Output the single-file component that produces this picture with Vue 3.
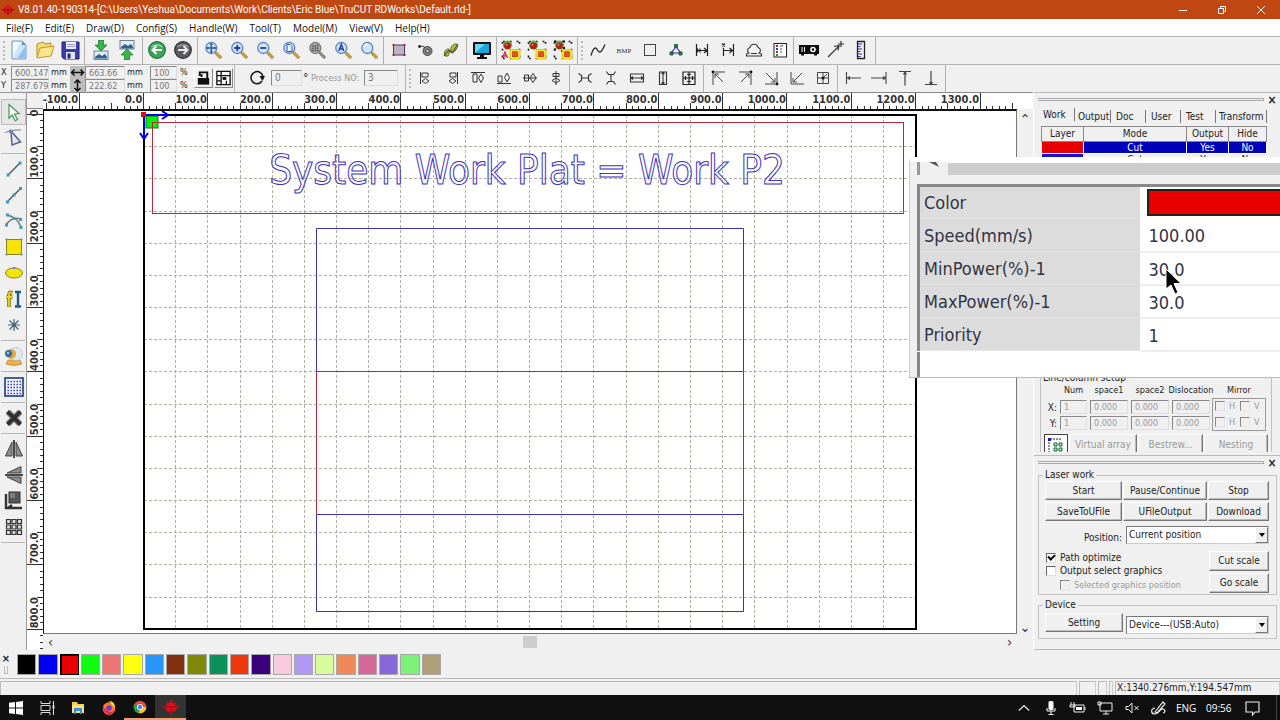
<script setup>
import { ref } from 'vue'

const lens = (inner = '', tint = '#cfe5fb', ring = '#5b82bd', handle = '#d2a33f') =>
  `<path d="M12.5 12.5l5.500 5.500" stroke="#7d6a3a" stroke-width="3"/><path d="M12.500 12.200l5.300 5.500" stroke="${handle}" stroke-width="2"/><circle cx="8.300" cy="8" r="5.500" fill="${tint}" stroke="${ring}" stroke-width="1.300"/>${inner}`

const groupArt = (extra) =>
  `<path d="M2 1.500h17M2 18.500h8" stroke="#111" stroke-width="1.600" stroke-dasharray="1.800 5"/><path d="M1.500 2v16M18.500 2v16" stroke="#111" stroke-width="1.600" stroke-dasharray="1.800 5"/>${extra}<rect x="9" y="9.500" width="10" height="9.500" fill="#f6ee20" stroke="#b8a800" stroke-width=".6"/><rect x="11.500" y="11.700" width="5" height="5" fill="#e8502a" stroke="#b02a10" stroke-width=".6"/>`
const ball = '<circle cx="6.500" cy="5" r="4.600" fill="#58b848"/><circle cx="6.500" cy="5.800" r="3.400" fill="#b81c1c"/><circle cx="5.500" cy="4.800" r="1" fill="#f08070"/>'

const art = {
  newFile: '<path d="M3 1h10l4 4v14H3z" fill="#cfe6fa" stroke="#7d9cc0"/><path d="M4 2h7L4 17z" fill="#f4faff"/><path d="M8 18L16 7v11z" fill="#8fc3ee"/><path d="M13 1v4h4z" fill="#5a8fcf"/>',
  open: '<path d="M2 17V4l6-2 2 2 6-1v4" fill="#f8dc7a" stroke="#b98a1c"/><path d="M2 18L5 8l14-2-3 10z" fill="#fbe58a" stroke="#c6952a"/>',
  save: '<path d="M1 2h17v17H3l-2-2z" fill="#3c3ca8" stroke="#1f1f78"/><rect x="5" y="2" width="10" height="7" fill="#f0f0fa"/><path d="M6 4.500h8M6 6.500h8" stroke="#9a9ac8"/><rect x="5" y="12" width="9" height="7" fill="#e2e2f4"/><rect x="6.500" y="13.500" width="3" height="5" fill="#26267a"/>',
  importPic: '<rect x="3" y="11" width="14" height="8.500" fill="#dceaf5" stroke="#708090"/><path d="M4 17l4-3 3 2 3-2 2 3v1.500H4z" fill="#335f88"/><path d="M7.500 0h5v5H16l-6 6-6-6h3.500z" fill="#35b54a" stroke="#17702a" stroke-width=".7"/>',
  exportPic: '<rect x="3" y=".5" width="14" height="8.500" fill="#dceaf5" stroke="#708090"/><path d="M4 7l4-3 3 2 3-2 2 3v1.500H4z" fill="#335f88"/><path d="M7.500 20h5v-5H16l-6-6-6 6h3.500z" fill="#35b54a" stroke="#17702a" stroke-width=".7"/>',
  undo: '<circle cx="10" cy="10" r="8.300" fill="#3fa55a" stroke="#176e33" stroke-width="1.200"/><path d="M4.500 7a7 5 0 0 1 11 0" stroke="#8fd6a0" stroke-width="1.500"/><path d="M15 10H6M9.500 6L5.500 10l4 4" stroke="#fff" stroke-width="2"/>',
  redo: '<circle cx="10" cy="10" r="8.300" fill="#5c5c60" stroke="#2e2e30" stroke-width="1.200"/><path d="M4.500 7a7 5 0 0 1 11 0" stroke="#9a9a9c" stroke-width="1.500"/><path d="M5 10h9M10.500 6l4 4-4 4" stroke="#e8e8e8" stroke-width="2"/>',
  zPan: lens('<path d="M8.300 4v8M4.300 8h8" stroke="#2b55a5" stroke-width="1.300"/><path d="M8.300 2.800l-1.800 2h3.600zM8.300 13.200l-1.800-2h3.600zM3.100 8l2-1.800v3.600zM13.500 8l-2-1.800v3.600z" fill="#2b55a5"/>'),
  zIn: lens('<path d="M8.300 5v6M5.300 8h6" stroke="#1f3f9c" stroke-width="1.800"/>'),
  zOut: lens('<path d="M5.300 8h6" stroke="#1f3f9c" stroke-width="1.800"/>'),
  zPage: lens('<path d="M6 4.500h3l2 2v5H6z" fill="#eef6ff" stroke="#2b55a5"/>'),
  zAll: lens('<path d="M4 6h8.500M4 8.200h8.500M4 10.400h8.500M6 4v8M8.300 4v8M10.600 4v8" stroke="#555" stroke-width=".8"/>', '#c4c4c4', '#777', '#8f8f8f'),
  zSel: lens('<path d="M5.800 11l2.500-6.500L10.800 11M6.700 9h3.200" stroke="#1f3f9c" stroke-width="1.400"/>'),
  zWin: lens('<path d="M4.800 7a4 4 0 0 1 4-3" stroke="#fff" stroke-width="1.400"/>'),
  frame: '<rect x="4.500" y="5" width="11" height="10" fill="#b9b4bf" stroke="#4a3a6a"/><path d="M3.500 4h2v2h-2zM14.500 4h2v2h-2zM3.500 14h2v2h-2zM14.500 14h2v2h-2z" fill="#c02020"/>',
  eye: '<circle cx="12.500" cy="11" r="4.500" fill="#888" stroke="#444"/><circle cx="12.500" cy="11" r="1.800" fill="#ddd" stroke="#333"/><path d="M5 6.500q3-1 5 1" stroke="#333"/><circle cx="4.500" cy="6.500" r="1.400" fill="#222"/>',
  nodes: '<path d="M4 16c-2-4 1-7 3-7s2 3 0 7zM10 11c-1-4 2-7 5-7s1 5-1 7-3 2-4 0z" fill="#b9c13a" stroke="#5e6612"/><path d="M3 16L8 10l3 3 6-9" stroke="#444" stroke-width="1.100"/>',
  monitor: '<rect x="1" y="2" width="18" height="13" rx="1" fill="#111"/><rect x="3" y="4" width="14" height="9" fill="#18a8dc"/><path d="M3 13V4h10z" fill="#6ed6f4"/><path d="M8 15h4v2h3v2H5v-2h3z" fill="#111"/>',
  groupA: groupArt(ball + '<path d="M1.500 18l2.500-6 2.500 6M2.500 16h3" stroke="#e02040" stroke-width="1.300"/>'),
  groupB: groupArt(ball),
  groupC: groupArt(ball + '<path d="M1 1.500h2M10 1.500h2M1 9.500h2M10 8h2M8 11h2" stroke="#111" stroke-width="2"/>'),
  curve: '<path d="M3 15.500C5 9 7 5.500 9.500 10S14 11 17 4.500" stroke="#222" stroke-width="1.300"/>',
  bmp: '<text x="10" y="13" text-anchor="middle" font-family="Liberation Serif, serif" font-size="7" fill="#333">BMP</text>',
  square: '<rect x="4.500" y="4.500" width="11" height="11" stroke="#444"/>',
  tree: '<path d="M10 7L5 13h10z" stroke="#2525b0" stroke-width="1.100"/><path d="M8.500 4.500h3v3h-3zM4 12h3v3H4zM13 12h3v3h-3z" fill="#1f8a50" stroke="#0c4a28" stroke-width=".8"/>',
  hEnds: '<path d="M4.500 4v12M15.500 4v12M5 10.500h10M12 8l3 2.500-3 2.500M8 8.500v4M4.500 8l2 2.500-2 2.500" stroke="#222" stroke-width="1.200"/>',
  xEnds: '<path d="M5.500 8v8M15.500 4v12M6 10.500h8M11.500 8l3 2.500-3 2.500M4 3.500l3 3M7 3.500l-3 3" stroke="#222" stroke-width="1.200"/>',
  stamp: '<path d="M5 13a3 3 0 0 1 1-5.500 4.100 4.100 0 0 1 8 0 3 3 0 0 1 1 5.500l2.500 1v2h-15v-2zM7 13.500h6" fill="#f3f3f3" stroke="#333" stroke-width="1.100"/>',
  list: '<rect x="4" y="3.500" width="12.500" height="13.500" fill="#fff" stroke="#222"/><path d="M6 6h2M6 12h2" stroke="#c02020" stroke-width="2"/><path d="M6 9h2" stroke="#2040c0" stroke-width="2"/><path d="M6 15h2" stroke="#209040" stroke-width="2"/><path d="M10 6h2l1-1M10 9h2M10 12h2" stroke="#555"/>',
  projector: '<path d="M0 5h20v9H0zM2 14h3v1.500H2zM15 14h3v1.500h-3z" fill="#0a0a0a"/><circle cx="14" cy="9.500" r="2.800" fill="#fff"/><circle cx="14" cy="9.500" r="1.300" fill="#111"/><path d="M3 7v5M5.500 7v5" stroke="#fff"/>',
  wand: '<path d="M3 17L14 6M9 6.500l5-1-1 5M16 1v6M13 4h6" stroke="#333" stroke-width="1.200"/>',
  ruler: '<path d="M6.500 1.500h7v17h-7z" fill="#f2f2ff" stroke="#222" stroke-width="1.300"/><path d="M7 4h4M7 6.500h2.500M7 9h4M7 11.500h2.500M7 14h4M7 16.500h2.500" stroke="#3d2a96"/>',
  alL: '<path d="M4.500 4v12M6 5h6v4H6zM6 13l3.500-2.500L13 13l-3.500 2.500z" stroke="#333"/>',
  alR: '<path d="M15.500 4v12M8 5h6v4H8zM7 13l3.500-2.500L14 13l-3.500 2.500z" stroke="#333"/>',
  alT: '<path d="M3 4.500h14M5 6h4v8H5zM13 6l2.500 4-2.500 4.500-2.500-4.500z" stroke="#333"/>',
  alB: '<path d="M3 15.500h14M4 8h4v6H4zM13 5l2.500 4.500L13 14l-2.500-4.500z" stroke="#333"/>',
  alHc: '<path d="M3 10h14M4.500 7h4v6h-4zM13 5.500l3 4.500-3 4.500-3-4.500z" stroke="#333"/>',
  alVc: '<path d="M10 3v14M7 5.500h6v3H7zM10 10l4 2.500-4 2.500-4-2.500z" stroke="#333"/>',
  spH: '<path d="M3.500 5.500l3 2v5l-3 2M16.500 5.500l-3 2v5l3 2M6.500 10h7" stroke="#333" stroke-width="1.100"/>',
  spV: '<path d="M5.500 3.500l2 3h5l2-3M5.500 16.500l2-3h5l2 3M10 6.500v7" stroke="#333" stroke-width="1.100"/>',
  sameW: '<path d="M3.500 6h13v8h-13zM3.500 10h13M6 8.500L4 10l2 1.500M14 8.500l2 1.500-2 1.500" stroke="#333" stroke-width="1.100"/>',
  sameH: '<path d="M6.500 4h7v12.500h-7zM10 4v12M8.500 6L10 4.500 11.500 6M8.500 14.500L10 16l1.500-1.500" stroke="#333" stroke-width="1.100"/>',
  sameS: '<path d="M4 4h12v12.500H4zM10 4v12M4 10h12M6.500 8v4M13.500 8v4M8 6.500h4M8 13.500h4" stroke="#222" stroke-width="1.200"/>',
  cTL: '<path d="M4 17V4h12M6 6l8 8M6 10V6h4" stroke="#444"/><circle cx="4" cy="4" r="1.400" fill="#111"/>',
  cTR: '<path d="M4 4h12v13M14 6l-8 8M10 6h4v4" stroke="#444"/><circle cx="16" cy="4" r="1.400" fill="#111"/>',
  cBR: '<path d="M4 16h12V4M5 5l9 9M10 14h4v-4" stroke="#444"/><circle cx="16" cy="16" r="1.400" fill="#111"/>',
  cBL: '<path d="M4 4v12h13M15 5l-9 9M6 10v4h4" stroke="#444"/>',
  cC: '<path d="M4.500 4.500h11v11h-11zM10 4v12M4 10h12M14 6l-4 4" stroke="#444"/><circle cx="10" cy="10" r="1.500" fill="#111"/>',
  mL: '<path d="M3.500 4v12M4 10h14M7 8.500L4.500 10 7 11.500" stroke="#444" stroke-width="1.100"/>',
  mR: '<path d="M17 4v12M2 10h14.500M14 8.500l2.500 1.500-2.500 1.500" stroke="#444" stroke-width="1.100"/>',
  mT: '<path d="M4 3.500h12M10 4v13.500M8.500 6.500L10 4l1.500 2.500" stroke="#444" stroke-width="1.200"/>',
  mB: '<path d="M4 16.500h12M10 3v13M8.500 14l1.500 2.500 1.500-2.500" stroke="#444" stroke-width="1.200"/>',
  pick: '<path d="M5 2.500l10 9-4.500.5 3 5.500-2.300 1.200-3-5.700L5 16z" fill="#fff" stroke="#3b9a54" stroke-width="1.200"/>',
  node: '<path d="M1 5c5-3 11-3 16-3" stroke="#777"/><path d="M7 3l9.500 11-8.500 3z" fill="#e2e6f2" stroke="#5a6280" stroke-width="1.500"/><path d="M5 2h4v3H5z" fill="#6a84b8"/>',
  line: '<path d="M4 16L16 4" stroke="#555" stroke-width="1.400"/><path d="M2.500 14.500h3v3h-3zM14.500 2.500h3v3h-3z" fill="#3e9cb8"/>',
  poly: '<path d="M3 17L17 3" stroke="#555" stroke-width="1.400"/><path d="M2 15.500h3v3H2zM8.500 8.500h3v3h-3zM15 2h3v3h-3z" fill="#3e9cb8"/>',
  bez: '<path d="M3 4q10 2 14 12M2 14q6-9 15-6" stroke="#777" stroke-width="1.600"/><path d="M2 2.500h3v3H2zM1 12.500h3v3H1zM15.500 15h3v3h-3zM15 7h3v3h-3zM8.500 6h3v3h-3z" fill="#3e9cb8"/>',
  rect: '<rect x="2.500" y="2.500" width="15" height="15" fill="#f6e30a" stroke="#8e8420"/><path d="M1.500 1.500h2v2h-2zM16.500 1.500h2v2h-2zM1.500 16.500h2v2h-2zM16.500 16.500h2v2h-2z" fill="#6f86c4"/>',
  oval: '<ellipse cx="10" cy="10" rx="8.500" ry="5" fill="#f6e30a" stroke="#8e8420"/><path d="M8.500 4h3v2h-3z" fill="#6f86c4"/>',
  text: '<path d="M8.500 4C5 2.500 5 4 5 6v12M2.500 8h6" stroke="#7d6a12" stroke-width="3.600"/><path d="M8.500 4C5 2.500 5 4 5 6v11.500M2.500 8h6" stroke="#f0d820" stroke-width="1.800"/><path d="M11 3h6M11 17.500h6M14 3v14" stroke="#1f5a80" stroke-width="2.400"/>',
  star: '<path d="M10 4v12M4 10h12M5.500 5.500l9 9M14.500 5.500l-9 9" stroke="#45607e" stroke-width="1.200"/>',
  cam: '<path d="M4 14h12l2 4q-8 3-16 0z" fill="#eab04a" stroke="#b57c1c" stroke-width=".6"/><circle cx="12" cy="8" r="6.500" fill="#dfe9f0" stroke="#a9bac8" stroke-width=".7"/><circle cx="7" cy="8" r="5" fill="#e3a63e"/><circle cx="4.500" cy="7.500" r="3.500" fill="#2d6e9e"/><circle cx="4" cy="7" r="1.200" fill="#9fd4f2"/>',
  gridDots: '<rect x="1" y="1" width="18" height="18" fill="#f4f6ff" stroke="#153f7c" stroke-width="1.600"/><path d="M3.500 4.500h14M3.500 7.500h14M3.500 10.500h14M3.500 13.500h14M3.500 16.500h14" stroke="#2b2bb0" stroke-width="1.400" stroke-dasharray="1.400 1.600"/>',
  del: '<path d="M4 4l12 12M16 4L4 16" stroke="#9a9a9a" stroke-width="6.500"/><path d="M3.500 3.500l13 13M16.500 3.500l-13 13" stroke="#303030" stroke-width="4"/>',
  mirH: '<path d="M8 3v14H1.500zM12 3v14h6.500z" fill="#8c8c8c" stroke="#444"/><path d="M10 1v18" stroke="#111" stroke-width="1.500"/>',
  mirV: '<path d="M3 8l14-6.500V8zM3 12l14 6.500V12z" fill="#8c8c8c" stroke="#444"/><path d="M1 10h18" stroke="#111" stroke-width="1.500"/>',
  dock: '<rect x="5" y="1" width="11" height="11" fill="#555" stroke="#333"/><path d="M6 2h5v5H6z" fill="#7d7d7d"/><path d="M2 3v14h16M4 17l4-3" stroke="#333" stroke-width="2.400"/>',
  array: '<path d="M2.500 2.500h4v4h-4zM8 2.500h4v4H8zM13.500 2.500h4v4h-4zM2.500 8h4v4h-4zM8 8h4v4H8zM13.500 8h4v4h-4zM2.500 13.500h4v4h-4zM8 13.500h4v4H8zM13.500 13.500h4v4h-4z" fill="#ddd" stroke="#333" stroke-width="1.200"/>',
  win: '<path d="M3 4.800L9 4v5.600H3zM10 3.900L17 3v6.600h-7zM3 10.400h6V16l-6-.8zM10 10.400h7V17l-7-.9z" fill="#fff"/>',
  task: '<path d="M4 3v2.500h9V3M4 17v-2.500h9V17M4 7.500h9v5H4z" stroke="#ddd"/><path d="M16.500 3v14" stroke="#ddd"/><path d="M15.500 7.500h2v3h-2z" fill="#ddd"/>',
  folder: '<path d="M4 4h5l1 2h6v9H4z" fill="#f7c84a"/><path d="M4 7h12v8H4z" fill="#fbe08a"/><path d="M6 10h8v6h-2v-3H8v3H6z" fill="#3b8fd0"/>',
  fox: '<circle cx="10" cy="10.500" r="6.300" fill="#ff7b22"/><path d="M10 3q6 0 6 7l-3-3z" fill="#ffd43c"/><path d="M4 6q-1 9 6 10.500 5 0 6-5-2 3-6 2-5-2-6-7.500z" fill="#e8285a"/><circle cx="10" cy="10" r="2.800" fill="#6a3ad0"/>',
  chrome: '<circle cx="10" cy="10" r="6.300" fill="#e24a3a"/><path d="M10 10L4.500 6.900A6.300 6.300 0 0 0 9 16.200z" fill="#2f9e50"/><path d="M10 10h6.300A6.300 6.300 0 0 1 9 16.200z" fill="#f6c62c"/><circle cx="10" cy="10" r="3" fill="#fff"/><circle cx="10" cy="10" r="2.200" fill="#4285f4"/>',
  red: '<path d="M10 2.500l2 3.500 3-.5-.5 2.500 4 2-4 2 .5 2.500-3-.5-2 4-2-4-3 .5.500-2.500-4-2 4-2L5 5.500l3 .5z" fill="#d8101c"/><path d="M3 10h14M10 12v4" stroke="#7c0810" stroke-width=".8"/>',
  up: '<path d="M5 12.500l5-5 5 5" stroke="#e8e8e8" stroke-width="1.200"/>',
  mic: '<rect x="7.500" y="3" width="5" height="9" rx="1.500" fill="#fff"/><path d="M6 10v3h8v-3M10 13v3M7.500 16.500h5" stroke="#fff"/>',
  batt: '<path d="M6 7h10v7H6zM17 9v3M3 4v3M6 4v3M2 7h5v2H2z" stroke="#eee"/><path d="M8 9h6v3H8z" fill="#fff"/>',
  net: '<path d="M5 5h12v8H5zM11 13v3M8 16h6M3 4h3v3H3z" stroke="#eee"/>',
  mute: '<path d="M4 8.500h2.500L10 5v10l-3.500-3.500H4zM12.500 8l4 4M16.500 8l-4 4" stroke="#eee"/>',
  pen: '<path d="M6 14L14 4l2 2-8 9zM6 10c-5 1-4 6 0 6s5-6 8-5 2 4 0 4" stroke="#eee" stroke-width="1.200"/>',
  note: '<path d="M4 4h13v10h-4l-2.500 3V14H4z" stroke="#eee" stroke-width="1.100"/>',
}

const topGroups = [
  { w: 85, lead: true, icons: ['newFile', 'open', 'save'] },
  { w: 58, icons: ['importPic', 'exportPic'] },
  { w: 55, icons: ['undo', 'redo'] },
  { w: 186, icons: ['zPan', 'zIn', 'zOut', 'zPage', 'zAll', 'zSel', 'zWin'] },
  { w: 83, icons: ['frame', 'eye', 'nodes'] },
  { w: 30, icons: ['monitor'] },
  { w: 81, icons: ['groupA', 'groupB', 'groupC'] },
  { w: 216, lead: true, icons: ['curve', 'bmp', 'square', 'tree', 'hEnds', 'xEnds', 'stamp', 'list'] },
  { w: 82, icons: ['projector', 'wand', 'ruler'] },
]
const alignGroups = [
  { w: 164, lead: true, icons: ['alL', 'alR', 'alT', 'alB', 'alHc', 'alVc'] },
  { w: 134, icons: ['spH', 'spV', 'sameW', 'sameH', 'sameS'] },
  { w: 134, icons: ['cTL', 'cTR', 'cBR', 'cBL', 'cC'] },
  { w: 108, icons: ['mL', 'mR', 'mT', 'mB'] },
]
const sideGroups = [
  ['pick', 'node'],
  ['line', 'poly', 'bez', 'rect', 'oval', 'text', 'star'],
  ['cam'],
  ['gridDots'],
  ['del'],
  ['mirH', 'mirV', 'dock', 'array'],
]

const menus = ['File(F)', 'Edit(E)', 'Draw(D)', 'Config(S)', 'Handle(W)', 'Tool(T)', 'Model(M)', 'View(V)', 'Help(H)']
const tabs = ['Work', 'Output', 'Doc', 'User', 'Test', 'Transform']
const palette = ['#000000', '#0000f0', '#e80000', '#10fc10', '#ee7474', '#ffff10', '#2896f8', '#803010', '#808808', '#0c905c', '#ee380a', '#3a007c', '#f8ccdc', '#b098f4', '#d8fc9c', '#f08858', '#d46898', '#8868d8', '#7cf078', '#b0a078']
const props = [
  ['Speed(mm/s)', '100.00'],
  ['MinPower(%)-1', '30.0'],
  ['MaxPower(%)-1', '30.0'],
  ['Priority', '1'],
]

/* Bed geometry: 100 mm spans 64.35 px on screen */
const step = 64.35
const ox = 100.5
const oy = 5.5
const hTicks = []
for (let i = -15; i <= 135; i++) hTicks.push({ i, x: Math.floor(ox + (i * step) / 10) + 0.5 })
const vTicks = []
for (let i = 0; i <= 83; i++) vTicks.push({ i, y: Math.floor(oy + (i * step) / 10) + 0.5 })
const tickLen = (i) => (i % 10 === 0 ? 16 : i % 5 === 0 ? 6 : 3)
const gridX = Array.from({ length: 23 }, (_, k) => Math.floor(ox + ((k + 1) * step) / 2) + 0.5)
const gridY = Array.from({ length: 15 }, (_, k) => Math.floor(oy + ((k + 1) * step) / 2) + 0.5)

const pathOptimize = ref(true)
const outputSelect = ref(false)
</script>

<template>
  <div class="app">
    <header class="title">
      <svg class="ic16" viewBox="0 0 20 20" fill="none" v-html="art.red"></svg>
      <h1>V8.01.40-190314-[C:\Users\Yeshua\Documents\Work\Clients\Eric Blue\TruCUT RDWorks\Default.rld-]</h1>
      <div class="winbtns">
        <button aria-label="Minimize"><svg viewBox="0 0 10 10"><path d="M1 5.500h8" /></svg></button>
        <button aria-label="Restore"><svg viewBox="0 0 10 10"><path d="M1.500 3.500h5v5h-5zM3.500 3.500v-2h5v5h-2" /></svg></button>
        <button aria-label="Close"><svg viewBox="0 0 10 10"><path d="M1 1l8 8M9 1L1 9" /></svg></button>
      </div>
    </header>

    <nav class="menu"><button v-for="m in menus" :key="m">{{ m }}</button></nav>

    <div class="bar">
      <div v-for="(g, gi) in topGroups" :key="gi" class="grp" :class="{ lead: g.lead }" :style="{ width: g.w + 'px' }">
        <button v-for="n in g.icons" :key="n" class="tb" :aria-label="n"><svg viewBox="0 0 20 20" fill="none" v-html="art[n]"></svg></button>
      </div>
    </div>

    <div class="bar second">
      <div class="xy">
        <label for="px">X</label><input id="px" class="num" value="600.147" />
        <span class="unit">mm</span>
        <svg class="dim" viewBox="0 0 15 13"><path d="M1.500 6.500h12M4.500 3.500l-3 3 3 3M10.500 3.500l3 3-3 3" /></svg>
        <input class="num" aria-label="Width" value="663.66" /><span class="unit">mm</span>
        <input class="num" aria-label="Scale X" value="100" /><span class="unit pct">%</span>
        <label for="py">Y</label><input id="py" class="num" value="287.679" />
        <span class="unit">mm</span>
        <svg class="dim" viewBox="0 0 15 13"><path d="M7.500 1v11M4.500 4l3-3 3 3M4.500 9l3 3 3-3" /></svg>
        <input class="num" aria-label="Height" value="222.62" /><span class="unit">mm</span>
        <input class="num" aria-label="Scale Y" value="100" /><span class="unit pct">%</span>
      </div>
      <button class="sq" aria-label="Lock ratio"><svg viewBox="0 0 18 18"><path d="M7 8V6H5V3h8v6" fill="none" stroke="#111" stroke-width="2" /><path d="M3 9h12v7H3z" fill="#111" /></svg></button>
      <button class="sq" aria-label="Anchor"><svg viewBox="0 0 18 18"><path d="M2 2h14v14H2zM2 6.500h14M6.500 2v14M2 12h4M12 12v4" fill="#fff" stroke="#111" stroke-width="1.400" /><path d="M8 8h4v3H8z" fill="#111" /></svg></button>
      <div class="rot">
        <svg viewBox="0 0 16 16"><path d="M13 11a6 6 0 1 1 1-4" fill="none" stroke="#111" stroke-width="1.500" /><path d="M10.500 6h5.500l-2.500 5z" fill="#111" /></svg>
        <input class="num" aria-label="Rotation" value="0" /><span class="deg">°</span>
        <label for="pno">Process NO:</label><input id="pno" class="num" value="3" />
      </div>
      <div v-for="(g, gi) in alignGroups" :key="gi" class="grp" :class="{ lead: g.lead }" :style="{ width: g.w + 'px' }">
        <button v-for="n in g.icons" :key="n" class="tb" :aria-label="n"><svg viewBox="0 0 20 20" fill="none" v-html="art[n]"></svg></button>
      </div>
    </div>

    <main class="work">
      <aside class="side">
        <div v-for="(g, gi) in sideGroups" :key="gi" class="sgrp">
          <button v-for="n in g" :key="n" class="tb" :class="{ on: n === 'pick' }" :aria-label="n"><svg viewBox="0 0 20 20" fill="none" v-html="art[n]"></svg></button>
        </div>
      </aside>

      <section class="stage">
        <div class="corner"></div>
        <svg class="rulerH">
          <path v-for="t in hTicks" :key="t.i" :d="`M${t.x} 16V${16 - tickLen(t.i)}`" />
          <text v-for="k in 15" :key="k" :x="ox + (k - 2) * step - 1" y="10" text-anchor="end">{{ (k - 2) * 100 }}.0</text>
        </svg>
        <svg class="rulerV">
          <path v-for="t in vTicks" :key="t.i" :d="`M16 ${t.y}H${16 - tickLen(t.i)}`" />
          <text v-for="k in 9" :key="k" :transform="`translate(11 ${oy + (k - 1) * step - (k > 1 ? 1 : -2)}) rotate(-90)`">{{ k > 1 ? (k - 1) * 100 + '.0' : '0' }}</text>
        </svg>
        <svg class="canvas">
          <g transform="translate(-1 -2)">
            <g class="grid">
              <path v-for="x in gridX" :key="'x' + x" :d="`M${x} 6V519`" />
              <path v-for="y in gridY" :key="'y' + y" :d="`M101 ${y}H872`" />
            </g>
            <rect x="101" y="6" width="772" height="514" class="bed" />
            <rect x="103" y="7" width="12" height="12" fill="#08f008" stroke="#187818" />
            <rect x="109.500" y="13.500" width="751" height="91" class="cut" />
            <path d="M273.500 262.500V119.500H700.500V262.500M273.500 405.500V502.500H700.500V405.500M273.500 405.500H700.500" class="mark" />
            <path d="M273.500 405.500V262.500H700.500V405.500" class="cut" />
            <text class="engrave" x="484" y="75" text-anchor="middle">System Work Plat = Work P2</text>
            <path d="M101 6h24M119 2l6 4-6 4M101 6v23M97 24l4 6 4-6" stroke="#0000f0" stroke-width="2" fill="none" />
            <rect x="98" y="3" width="5" height="5" fill="#d80f20" />
          </g>
        </svg>
        <div class="vs"><i>⌃</i><i>⌄</i></div>
        <div class="hs"><i>‹</i><b></b><i>›</i></div>
      </section>

      <aside class="docks">
        <section class="dock top">
          <div class="grip"><span></span><button aria-label="Close panel">×</button></div>
          <div class="tabs"><button v-for="(t, i) in tabs" :key="t" :class="{ active: i === 0 }">{{ t }}</button></div>
          <table class="layers">
            <thead><tr><th>Layer</th><th>Mode</th><th>Output</th><th>Hide</th></tr></thead>
            <tbody>
              <tr class="sel"><td class="lr"></td><td>Cut</td><td>Yes</td><td>No</td></tr>
              <tr><td class="lb"></td><td>Cut</td><td>Yes</td><td>No</td></tr>
            </tbody>
          </table>
          <fieldset class="arr">
            <legend>Line/column setup</legend>
            <div class="arrgrid">
              <span></span><span>Num</span><span>space1</span><span>space2</span><span class="last">Dislocation</span>
              <template v-for="a in ['X', 'Y']" :key="a">
                <label :for="'n' + a">{{ a }}:</label>
                <input :id="'n' + a" class="num" value="1" disabled />
                <input class="num" :aria-label="a + ' space1'" value="0.000" disabled />
                <input class="num" :aria-label="a + ' space2'" value="0.000" disabled />
                <input class="num" :aria-label="a + ' dislocation'" value="0.000" disabled />
              </template>
            </div>
            <div class="mirror">
              <span>Mirror</span>
              <div><label v-for="(k, i) in ['H', 'V', 'H', 'V']" :key="i"><input type="checkbox" disabled />{{ k }}</label></div>
            </div>
            <div class="arrbtns">
              <button class="virt" aria-label="Array layout"><svg viewBox="0 0 20 18"><path d="M3 17V3h13" fill="none" stroke="#222" stroke-dasharray="2 1" /><path d="M8 7h3v3H8zM13 7h3v3h-3zM8 12h3v3H8zM13 12h3v3h-3z" fill="#bfe8c8" stroke="#0f6a38" /><path d="M2 2h3v3H2z" fill="#1818b0" /></svg></button>
              <button class="btn" disabled>Virtual array</button><button class="btn" disabled>Bestrew...</button><button class="btn" disabled>Nesting</button>
            </div>
          </fieldset>
        </section>

        <section class="dock low">
          <div class="grip"><span></span><button aria-label="Close panel">×</button></div>
          <fieldset class="laser">
            <legend>Laser work</legend>
            <div class="three">
              <button class="btn">Start</button><button class="btn">Pause/Continue</button><button class="btn">Stop</button>
              <button class="btn">SaveToUFile</button><button class="btn">UFileOutput</button><button class="btn">Download</button>
            </div>
            <div class="pos">
              <label for="pos">Position:</label>
              <span class="sel-wrap"><select id="pos"><option>Current position</option></select><i></i></span>
            </div>
            <div class="opts">
              <div class="checks">
                <label><input v-model="pathOptimize" type="checkbox" />Path optimize</label>
                <label><input v-model="outputSelect" type="checkbox" />Output select graphics</label>
                <label class="off"><input type="checkbox" disabled />Selected graphics position</label>
              </div>
              <div class="scales"><button class="btn">Cut scale</button><button class="btn">Go scale</button></div>
            </div>
          </fieldset>
          <fieldset class="device">
            <legend>Device</legend>
            <button class="btn">Setting</button>
            <span class="sel-wrap"><select aria-label="Device"><option>Device---(USB:Auto)</option></select><i></i></span>
          </fieldset>
        </section>
      </aside>
    </main>

    <div class="palette">
      <div class="pgrip"><button aria-label="Close palette">×</button><span></span></div>
      <div class="swatches"><button v-for="(c, i) in palette" :key="c" :aria-label="c" :class="{ cur: i === 2 }" :style="{ background: c }"></button></div>
    </div>

    <footer class="status"><span class="grow"></span><span class="a"></span><span class="b"></span><span class="c"></span><span class="coord">X:1340.276mm,Y:194.547mm</span></footer>

    <div class="taskbar">
      <button v-for="n in ['win', 'task', 'folder', 'fox', 'chrome', 'red']" :key="n" :aria-label="n" :class="'t-' + n"><svg viewBox="0 0 20 20" fill="none" v-html="art[n]"></svg></button>
      <div class="tray">
        <button v-for="n in ['up', 'mic', 'batt', 'net', 'mute', 'pen']" :key="n" :aria-label="n"><svg viewBox="0 0 20 20" fill="none" v-html="art[n]"></svg></button>
        <span>ENG</span><span class="clock">09:56</span>
        <button class="t-note" aria-label="Notifications"><svg viewBox="0 0 20 20" fill="none" v-html="art.note"></svg></button>
      </div>
    </div>

    <div class="magnify">
      <div class="mscroll"><svg viewBox="0 0 12 8"><path d="M1 0h7l3 5z" fill="#555" /></svg><span></span></div>
      <table>
        <tbody>
          <tr><th>Color</th><td><div class="colorbox"></div></td></tr>
          <tr v-for="p in props" :key="p[0]"><th>{{ p[0] }}</th><td>{{ p[1] }}</td></tr>
        </tbody>
      </table>
      <svg class="cursor" viewBox="0 0 18 28"><path d="M1 1v20l5-4 4 9 3-1.500-4-9h7z" fill="#000" stroke="#fff" /></svg>
    </div>
  </div>
</template>

<style>
html, body { margin: 0; background: #f0f0f0; }
</style>

<style scoped>
.app { position: relative; height: 100vh; display: flex; flex-direction: column; overflow: hidden; background: #f0f0f0; color: #222; font-family: "DejaVu Sans Condensed", "DejaVu Sans", sans-serif; font-size: 10px; line-height: 12px; }
* { box-sizing: border-box; }
button { font: inherit; color: inherit; padding: 0; margin: 0; border: 0; background: none; display: flex; align-items: center; justify-content: center; white-space: nowrap; }
fieldset { min-width: 0; margin: 0; padding: 0; border: 1px solid #c4c4c4; }
legend { padding: 0 2px; margin-left: 4px; }

.title { flex: none; height: 19px; display: flex; align-items: center; background: #bf4812; color: #fff; font-family: Roboto, "Open Sans", sans-serif; }
.ic16 { width: 16px; height: 16px; }
.title h1 { margin: 0 auto 0 2px; font-size: 10px; font-weight: 400; line-height: 18px; }
.winbtns { display: flex; }
.winbtns button { width: 39px; height: 19px; }
.winbtns svg { width: 10px; height: 10px; fill: none; stroke: #fff; }

.menu { flex: none; height: 17px; padding-left: 6px; display: flex; gap: 12px; background: #fff; font-family: "Open Sans", "Noto Sans", sans-serif; font-size: 10px; line-height: 16px; color: #111; }

.bar { flex: none; height: 28px; display: flex; border-top: 1px solid #b4b4b4; }
.grp { display: flex; align-items: center; justify-content: center; padding-bottom: 2px; border-right: 1px solid #b0b0b0; }
.grp.lead { padding-left: 6px; position: relative; }
.grp.lead::before { content: ""; position: absolute; left: 3px; top: 4px; bottom: 4px; border-left: 2px dotted #bbb; }
.tb { flex: none; width: 26px; height: 26px; }
.tb svg { width: 20px; height: 20px; }

.num { min-width: 0; width: 100%; height: 13px; padding: 0 0 0 3px; border: 1px solid; border-color: #888 #ddd #ddd #888; background: #f0f0f0; color: #777; font: inherit; line-height: 11px; border-radius: 0; }
.xy { display: grid; grid-template-columns: 11px 38px 21px 15px 40px 25px 27px 17px; grid-template-rows: 13px 13px; font-size: 9px; line-height: 12px; padding-top: 1px; }
.xy label { padding-left: 1px; }
.unit { padding-left: 2px; }
.pct { padding-left: 3px; }
.dim { width: 15px; height: 13px; background: #bdbdbd; fill: none; stroke: #111; stroke-width: 1.5; }
.sq { width: 19px; height: 20px; margin: 3px 1px 0 0; border: 1px solid #999; border-color: #fff #888 #888 #fff; }
.sq svg { width: 18px; height: 18px; }
.rot { width: 172px; display: flex; align-items: center; padding-left: 14px; padding-bottom: 2px; border-left: 1px solid #b8b8b8; border-right: 1px solid #b8b8b8; color: #999; font-size: 9px; }
.rot svg { width: 16px; height: 16px; margin-right: 6px; flex: none; }
.rot .num { width: 31px; height: 16px; font-size: 10px; }
.rot .num:last-child { width: 34px; }
.deg { font-size: 12px; width: 9px; padding-left: 1px; color: #333; flex: none; }
.rot label { width: 53px; white-space: nowrap; flex: none; }

.work { flex: 1; min-height: 0; display: flex; }
.side { flex: none; width: 27px; padding-top: 6px; border-top: 1px solid #999; border-right: 1px solid #999; }
.sgrp { border-bottom: 1px solid #bbb; margin: 0 1px 2px; padding-bottom: 2px; }
.side .tb { width: 25px; }
.side .tb.on { background: #e6e6e6; border: 1px solid #bbb; }

.stage { flex: 1; min-width: 0; display: grid; grid-template: 17px minmax(0, 1fr) 16px / 16px minmax(0, 1fr) 16px; background: #f0f0f0; }
.corner { border-top: 1px solid #888; border-bottom: 1px solid #888; background: #f0f0f0; }
.rulerH { width: 100%; height: 17px; grid-column: 2 / 4; background: #fff; border-top: 1px solid #888; }
.rulerV { width: 16px; height: 100%; grid-row: 2 / 4; background: #fff; }
.rulerH path, .rulerV path { stroke: #333; fill: none; }
.rulerH text, .rulerV text { font-size: 11px; font-weight: 700; fill: #333; }
.canvas { width: 100%; height: 100%; grid-area: 2 / 2; background: #fff; border-top: 2px solid #111; border-left: 1px solid #111; border-right: 1px solid #777; border-bottom: 1px solid #777; overflow: hidden; }
.grid path { stroke: #b4b0a0; stroke-dasharray: 3 2; }
.bed { fill: none; stroke: #000; stroke-width: 2; }
.cut { fill: none; stroke: #b8283c; }
.mark { fill: none; stroke: #3a32b0; }
.engrave { font-family: "DejaVu Sans Condensed", sans-serif; font-size: 40px; fill: none; stroke: #4034c0; stroke-width: 1; }
.vs { grid-area: 2 / 3; display: flex; flex-direction: column; justify-content: space-between; align-items: center; padding: 4px 0 1px; }
.hs { grid-area: 3 / 2; display: flex; justify-content: space-between; align-items: center; padding: 0 5px; }
.vs i, .hs i { font-style: normal; font-size: 14px; line-height: 12px; color: #333; }
.hs b { width: 14px; height: 12px; background: #cdcdcd; }

.docks { flex: none; width: 247px; display: flex; flex-direction: column; border-left: 1px solid #fff; }
.dock { padding: 0 3px 0 4px; border-top: 1px solid #bbb; }
.dock.top { height: 360px; overflow: hidden; }
.dock.low { flex: 1; border-bottom: 1px solid #bbb; margin-top: 3px; }
.grip { display: flex; align-items: center; height: 13px; gap: 3px; }
.grip span { flex: 1; height: 3px; border: 1px solid #aaa; border-left: 0; }
.grip button { width: 10px; height: 10px; font-size: 12px; font-weight: 700; }
.tabs { display: grid; grid-template-columns: 34px 36px 35px 35px 35px 51px; height: 19px; padding: 1px 0 0 3px; }
.tabs button { height: 13px; margin-top: 3px; padding-left: 3px; border-right: 1px solid #777; justify-content: flex-start; }
.tabs button:nth-child(n+3) { padding-left: 5px; }
.tabs button.active { margin-top: 1px; padding-left: 2px; }
.tabs button:last-child { padding-left: 3px; }
.layers { width: 226px; margin: 1px 0 0 3px; border-collapse: collapse; table-layout: fixed; }
.layers th { height: 15px; padding: 0; font-weight: 400; border: 1px solid #888; line-height: 12px; }
.layers th:nth-child(1) { width: 42px; } .layers th:nth-child(3) { width: 42px; } .layers th:nth-child(4) { width: 38px; }
.layers td { height: 12px; padding: 0; text-align: center; line-height: 10px; border-right: 1px solid #fff; border-top: 1px solid #fff; }
.layers .sel td { background: #0000b8; color: #fff; }
.layers .sel .lr { background: #e80000; }
.layers .lb { background: #1010d8; }

.arr { margin: 207px 5px 0 2px; height: 100px; display: grid; grid-template: 50px 20px / 171px 54px; border-color: #c0c0c0; }
.arr legend { line-height: 10px; margin-left: 0; }
.arrgrid { display: grid; grid-template-columns: 16px 27px 38px 38px 38px; grid-template-rows: 15px 14px 14px; column-gap: 3px; row-gap: 2px; text-align: center; }
.arrgrid label { line-height: 15px; text-align: right; }
.arrgrid .num { height: 14px; font-size: 9px; color: #999; }
.arrgrid span { line-height: 14px; font-size: 9px; }
.arrgrid .last { display: flex; justify-content: center; white-space: nowrap; }
.mirror { font-size: 9px; text-align: center; }
.mirror span { display: block; line-height: 14px; }
.mirror > div { display: grid; grid-template-columns: 1fr 1fr; height: 33px; margin-top: 1px; align-items: center; border: 1px solid #999; padding-left: 2px; color: #999; }
.mirror label { display: flex; align-items: center; gap: 4px; }
.arrbtns { grid-column: 1 / 3; display: grid; grid-template-columns: 24px 68px 65px 64px; gap: 1px; padding: 1px 0 0 3px; height: 23px; }
.arrbtns .btn { height: 22px; }
.virt { height: 22px; border: 1px solid #444; background: #fff; }
.virt svg { width: 20px; height: 18px; }

input[type="checkbox"] { appearance: none; flex: none; width: 10px; height: 10px; margin: 0; border: 1px solid; border-color: #666 #ddd #ddd #666; background: #fff; display: grid; place-items: center; }
input[type="checkbox"]:disabled { background: #f0f0f0; border-color: #888 #e4e4e4 #e4e4e4 #888; }
input[type="checkbox"]:checked::after { content: ""; width: 5px; height: 3px; border-left: 2px solid #000; border-bottom: 2px solid #000; transform: rotate(-45deg); margin-bottom: 2px; }

.btn { height: 19px; border: 1px solid; border-color: #fff #777 #777 #fff; box-shadow: inset -1px -1px #bbb; }
.btn:disabled { color: #999; }
.laser { height: 126px; padding: 0 7px 0 6px; }
.laser legend, .device legend { margin-left: -2px; }
.three { display: grid; grid-template-columns: 77px 84px 61px; row-gap: 2px; column-gap: 1px; }
.pos { display: flex; margin-top: 5px; align-items: flex-start; justify-content: flex-end; gap: 4px; }
.pos label { line-height: 24px; }
.sel-wrap { position: relative; display: block; width: 143px; height: 18px; }
select { appearance: none; width: 100%; height: 100%; padding: 0 2px; font: inherit; color: inherit; background: #fff; border: 1px solid; border-color: #777 #ccc #ccc #777; border-radius: 0; }
.sel-wrap i { position: absolute; right: 1px; top: 1px; bottom: 1px; width: 13px; background: #f0f0f0; border: 1px solid; border-color: #fff #777 #777 #fff; display: grid; place-items: center; pointer-events: none; }
.sel-wrap i::after { content: ""; border: 3px solid transparent; border-top: 4px solid #000; border-bottom: 0; }
.opts { display: flex; justify-content: space-between; margin-top: 1px; }
.checks label { display: flex; align-items: center; gap: 4px; height: 13px; white-space: nowrap; margin-left: 1px; }
.checks .off { color: #999; height: 16px; margin-left: 15px; font-size: 9px; }
.scales { display: grid; gap: 1px; width: 60px; }
.scales .btn { height: 20px; }
.device { height: 40px; padding: 2px 7px 0 6px; display: flex; gap: 3px; margin-top: 4px; }
.device .btn { flex: 1; }
.device .sel-wrap { margin-top: 3px; }

.palette { flex: none; height: 28px; display: flex; padding: 4px 0 0 2px; }
.pgrip { width: 15px; }
.pgrip button { width: 8px; height: 10px; font-weight: 700; font-size: 11px; }
.pgrip span { display: block; width: 4px; height: 8px; margin: 2px 0 0 2px; border: 1px solid #bbb; border-top: 0; }
.swatches { display: grid; grid-template-columns: repeat(20, 1fr); gap: 2px; width: 424px; height: 21px; }
.swatches button { border: 1px solid #a8a8a8; }
.swatches .cur { border-color: #000; border-width: 2px 1px 1px 2px; }

.status { flex: none; height: 17px; display: flex; gap: 2px; padding-top: 2px; border-top: 1px solid #bbb; }
.status span { border: 1px solid #bbb; border-right-color: #ccc; border-bottom: 0; }
.status .grow { flex: 1; } .status .a { width: 17px; } .status .b { width: 9px; } .status .c { width: 4px; }
.status .coord { width: 165px; padding-left: 1px; line-height: 12px; }

.taskbar { flex: none; height: 25px; display: flex; background: #101010; color: #fff; }
.taskbar button { width: 31px; height: 25px; }
.taskbar svg { width: 20px; height: 20px; }
.t-chrome, .t-red { border-bottom: 2px solid #f0a070 !important; }
.t-red { background: #333; }
.tray { margin-left: auto; display: flex; align-items: center; font-family: "Open Sans", "Noto Sans", sans-serif; font-size: 10px; }
.tray button { width: 27px; }
.tray span { width: 29px; padding-left: 4px; }
.tray .clock { width: 34px; padding-left: 5px; }
.tray .t-note { width: 42px; padding-right: 8px; border-right: 1px solid #444; margin-right: 3px; }

.magnify { position: absolute; left: 909px; right: 0; top: 157px; height: 221px; border-top: 5px solid #fff; border-bottom: 1px solid #bbb; border-left: 1px solid #ccc; background: #f0f0f0; padding-left: 7px; display: flex; flex-direction: column; overflow: hidden; }
.mscroll { flex: none; height: 13px; display: flex; border-left: 3px solid #999; margin-bottom: 9px; }
.mscroll svg { width: 12px; height: 8px; margin: 0 8px 0 8px; }
.mscroll span { flex: 1; background: #cdcdcd; border-top: 1px solid #fff; }
.magnify::after { content: ""; flex: 1; background: #fff; border-left: 3px solid #888; }
.magnify table { flex: none; border-collapse: collapse; width: 100%; table-layout: fixed; background: #fff; border-top: 3px solid #888; border-left: 3px solid #888; font-size: 18px; line-height: 22px; color: #334; }
.magnify th { width: 221px; height: 33px; padding: 0 0 0 4px; text-align: left; font-weight: 400; background: #dcdcdc; border-bottom: 1px solid #e4e4e4; }
.magnify td { padding: 3px 0 0 9px; border-bottom: 2px solid #eee; }
.magnify tr:first-child td { border: 0; padding: 0 0 0 7px; }
.magnify tr:nth-child(n+2) th { padding-top: 2px; }
.colorbox { height: 27px; background: #e80000; border: 2px solid #222; border-right: 0; }
.cursor { position: absolute; left: 255px; top: 106px; width: 18px; height: 28px; }
</style>
